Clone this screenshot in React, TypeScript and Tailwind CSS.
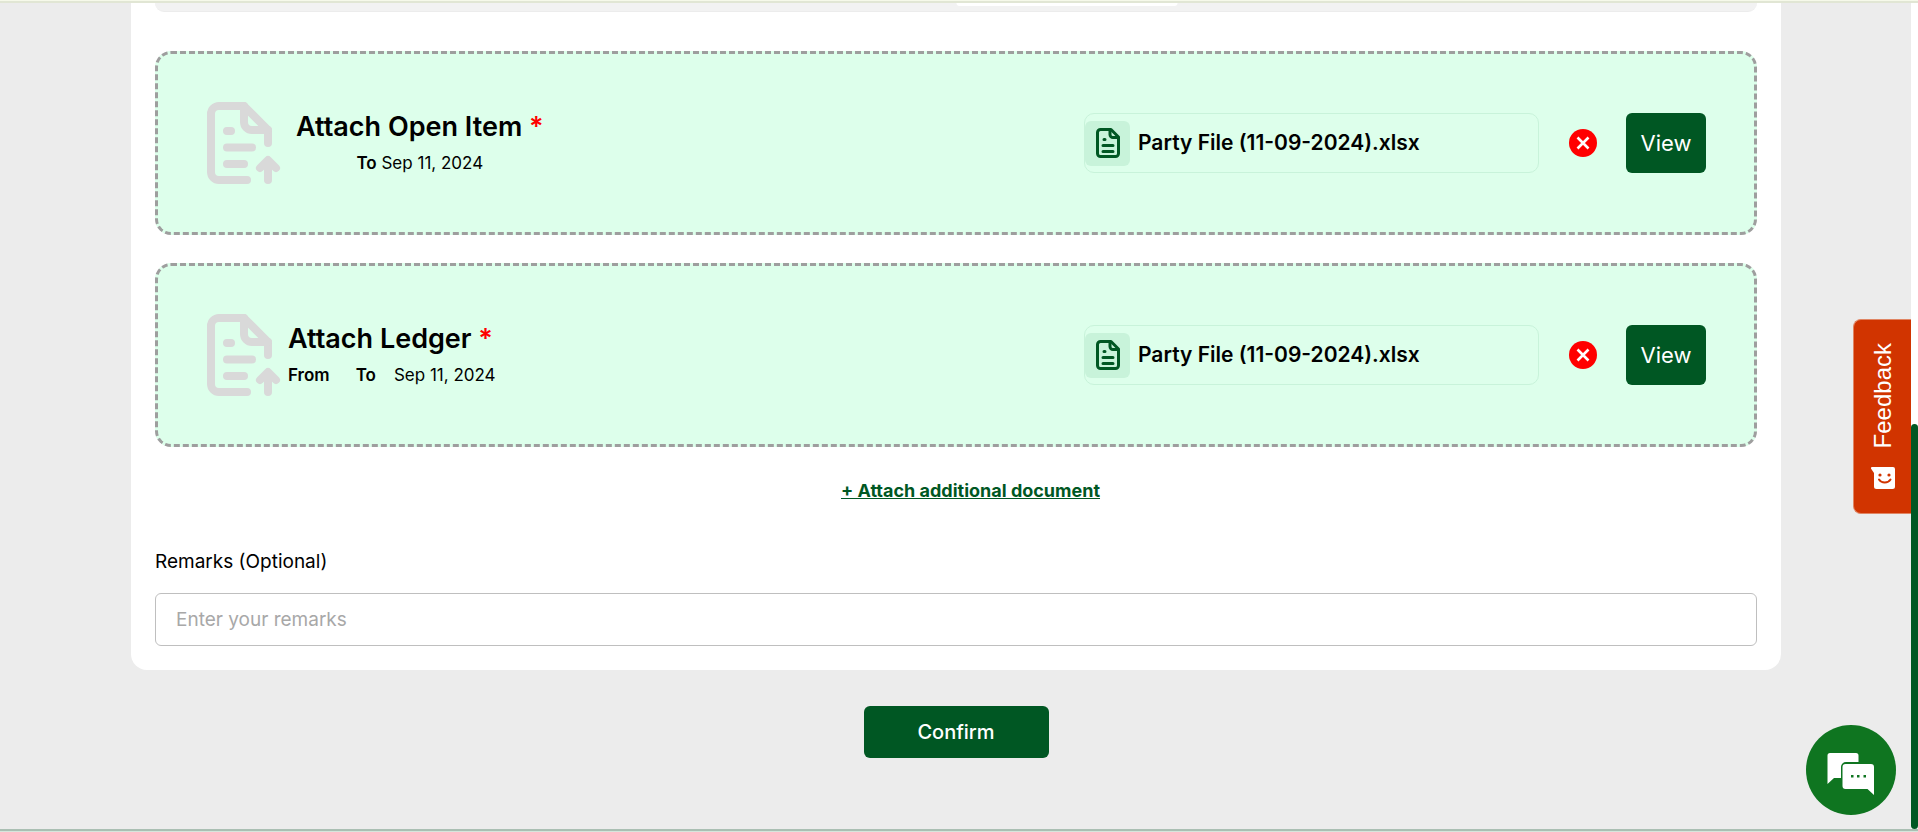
import React from 'react';

const UploadIcon = () => (
  <svg className="h-[84px] w-[76px] shrink-0" viewBox="0 0 76 84" fill="none" stroke="#d9d9d9" strokeWidth={8} strokeLinecap="round" strokeLinejoin="round">
    <path d="M42 79H14a8 8 0 01-8-8V13a8 8 0 018-8h25L63 29V42" />
    <path d="M39 5v16a8 8 0 008 8h16" />
    <path d="M22 30h4M22 46.500h25M22 63h17" />
    <path d="M63 79V60M55 67l8-8 8 8" />
  </svg>
);

const FileIcon = () => (
  <svg className="h-[30px] w-[24px]" viewBox="0 0 24 30" fill="none" stroke="#005723" strokeWidth={3} strokeLinecap="round" strokeLinejoin="round">
    <path d="M15 1.500H4.500a3 3 0 00-3 3v21a3 3 0 003 3h15a3 3 0 003-3V9z" />
    <path d="M14 2v4.500a3 3 0 003 3h5" />
    <path d="M8 11.500h1M7 17.500h10M7 23.500h10" />
  </svg>
);

const RemoveIcon = () => (
  <svg className="h-[28px] w-[28px]" viewBox="0 0 28 28">
    <circle cx="14" cy="14" r="14" fill="#ff0000" />
    <path d="M8.500 8.500l11 11M19.500 8.500l-11 11" stroke="#fff" strokeWidth={2.6} />
  </svg>
);

const AttachmentCard = ({ fileName, children }: { fileName: string, children: React.ReactNode }) => {
  return (
    <section className="flex items-center justify-between rounded-2xl border-3 border-dashed border-[#9e9e9e] bg-[#ddffeb] py-[47px] pr-12 pl-[47px]">
      <div className="flex items-center">
        <UploadIcon />
        {children}
      </div>
      <div className="flex items-center">
        <div className="flex h-[60px] w-[455px] items-center gap-2 rounded-[10px] border border-[#c8f3da]">
          <div className="flex h-[45px] w-[45px] items-center justify-center rounded-md bg-[#c8f3da]">
            <FileIcon />
          </div>
          <span className="text-[21px] font-semibold">{fileName}</span>
        </div>
        <button type="button" aria-label="Remove file" className="mr-[29px] ml-[30px]">
          <RemoveIcon />
        </button>
        <button type="button" className="h-[60px] w-[80px] rounded-md bg-[#005723] text-[22px] text-white">View</button>
      </div>
    </section>
  );
};

const FeedbackTab = () => (
  <button
    type="button"
    className="fixed top-[319px] right-[7px] flex h-[195px] w-[58px] flex-col items-center justify-between rounded-l-lg border border-r-0 border-[#e08563] bg-[#d13400] pt-[23px] pb-[24px] font-['Liberation_Sans',sans-serif] text-2xl text-white"
  >
    <span className="rotate-180 [writing-mode:vertical-rl]">Feedback</span>
    <svg className="h-[22px] w-[24px]" viewBox="0 0 24 22">
      <path d="M1 0h21a2 2 0 012 2v17.500a2.500 2.500 0 01-2.500 2.500H5.500A2.500 2.500 0 013 19.500V6L.3 2C-.3 1 0 0 1 0z" fill="#fff" />
      <circle cx="9" cy="8" r="1.600" fill="#d13400" />
      <circle cx="18" cy="8" r="1.600" fill="#d13400" />
      <path d="M8 12.500c2.500 4 9 4 11.500 0" fill="none" stroke="#d13400" strokeWidth={2} strokeLinecap="round" />
    </svg>
  </button>
);

const ChatButton = () => (
  <button type="button" aria-label="Open chat" className="fixed right-[22px] bottom-[17px] flex h-[90px] w-[90px] items-center justify-center rounded-full bg-[#0f7520]">
    <svg className="mt-[8px] h-[42px] w-[48px]" viewBox="0 0 48 42">
      <path d="M3 0h26a2.500 2.500 0 012.500 2.500V9H19a5 5 0 00-5 5v11H7L.5 31V2.500A2.500 2.500 0 013 0z" fill="#fff" />
      <path d="M18.500 11H44a3 3 0 013 3v28l-6.500-6h-22a3 3 0 01-3-3V14a3 3 0 013-3z" fill="#fff" />
      <path d="M24 22h2.500v2.500H24zM30 22h2.500v2.500H30zM36.500 22H39v2.500h-2.500z" fill="#0f7520" />
    </svg>
  </button>
);

const App: React.FC = () => {
  return (
    <div className="flex min-h-screen flex-col font-['Inter',sans-serif] text-black">
      <div className="h-[3px] border-b-2 border-[#e1e6d4] bg-[#f6f9ea]" />
      <div className="flex flex-1">
        <main className="flex-1 bg-[#ececec] pr-[130px] pl-[131px]">
          <div className="rounded-b-2xl bg-white px-6 pb-6">
            <div className="mb-[39px] h-[9px] rounded-b-xl border-b border-[#ececec] bg-[#f2f2f2]">
              <div className="mx-auto h-[3px] w-[221px] translate-x-1/2 rounded-b-md bg-white" />
            </div>

            <div className="flex flex-col gap-7">
              <AttachmentCard fileName="Party File (11-09-2024).xlsx">
                <div className="ml-[15px] text-center">
                  <h2 className="text-[27px] leading-10 font-semibold">Attach Open Item <span className="text-[#ff0000]">*</span></h2>
                  <p className="text-[17px] leading-8"><b className="font-semibold">To</b> Sep 11, 2024</p>
                </div>
              </AttachmentCard>
              <AttachmentCard fileName="Party File (11-09-2024).xlsx">
                <div className="ml-[7px]">
                  <h2 className="text-[27px] leading-10 font-semibold">Attach Ledger <span className="text-[#ff0000]">*</span></h2>
                  <p className="flex text-[17px] leading-8">
                    <b className="mr-[26px] font-semibold">From</b>
                    <b className="mr-[18px] font-semibold">To</b>
                    Sep 11, 2024
                  </p>
                </div>
              </AttachmentCard>
            </div>

            <div className="mt-7 pl-[29px] text-center">
              <a href="#attach" className="text-lg leading-8 font-bold text-[#005723] underline">+ Attach additional document</a>
            </div>

            <label htmlFor="remarks" className="mt-[39px] block text-[19px] leading-8">Remarks (Optional)</label>
            <input
              id="remarks"
              type="text"
              placeholder="Enter your remarks"
              className="mt-[15px] block h-[53px] w-full rounded-md border border-[#bfbfbf] px-5 text-[19px] placeholder:text-[#a8a8a8]"
            />
          </div>

          <div className="flex justify-center pt-9 pb-[70px]">
            <button type="button" className="h-[52px] w-[185px] rounded-md bg-[#005723] text-xl font-medium text-white">Confirm</button>
          </div>
        </main>
        <div className="flex w-[7px] flex-col justify-end bg-white">
          <div className="h-[49%] rounded-full bg-[#005723]" />
        </div>
      </div>
      <div className="h-[3px] border-t-2 border-[#aabfb3] bg-[#d5e6dc]" />

      <FeedbackTab />
      <ChatButton />
    </div>
  );
};

export default App;
